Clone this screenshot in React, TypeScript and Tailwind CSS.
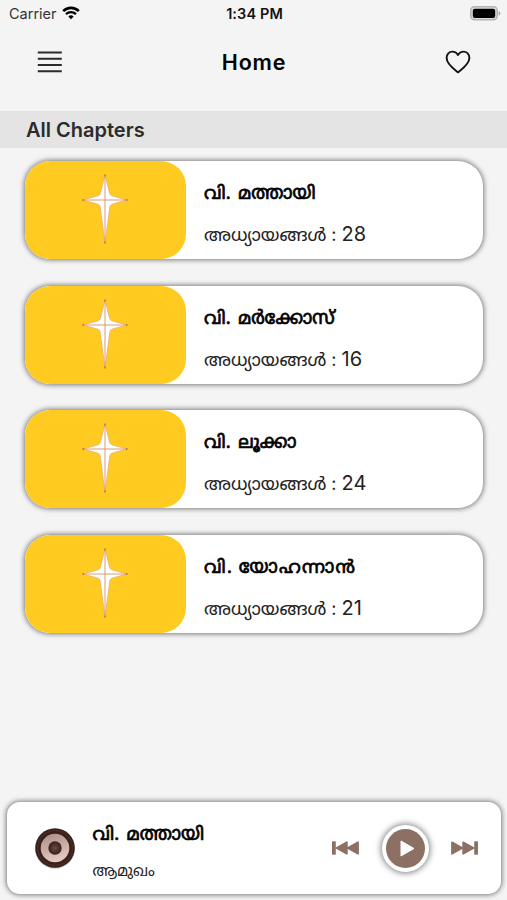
import { clsx } from "clsx";

const chapters = [
  { title: "വി. മത്തായി", count: 28 },
  { title: "വി. മർക്കോസ്", count: 16 },
  { title: "വി. ലൂക്കാ", count: 24 },
  { title: "വി. യോഹന്നാൻ", count: 21, titleClass: "tracking-[1.3px] [word-spacing:-1.5px]" },
];

function StatusBar() {
  return (
    <div className="flex h-7 items-center justify-between pl-[9px] pr-[7px] font-['Inter',sans-serif] text-[#111]">
      <div className="flex w-40 items-center gap-[5px]">
        <span className="text-[14.5px] leading-none text-[#333]">Carrier</span>
        <svg width="18" height="14" viewBox="0 0 18 14" fill="none" className="-mt-[2px]">
          <path d="M1.2 5.1a11.2 11.2 0 0 1 15.6 0" stroke="#000" strokeWidth="2.7" />
          <path d="M4 8.2a7.2 7.2 0 0 1 10 0" stroke="#000" strokeWidth="2.3" />
          <path d="M9 13.3l-2.7-2.8a3.8 3.8 0 0 1 5.4 0z" fill="#000" />
        </svg>
      </div>
      <span className="pt-[1px] text-[14.5px] font-semibold leading-none tracking-[0.1px]">1:34 PM</span>
      <div className="flex w-40 justify-end">
        <svg width="31" height="15" viewBox="0 0 31 15" className="-mr-[1px] -mt-[2px]">
          <rect x="0.8" y="0.8" width="26.4" height="13" rx="3.7" fill="#ddd" stroke="#b4b4b4" strokeWidth="1.6" />
          <rect x="2.8" y="2.7" width="22.4" height="9.2" rx="2" fill="#000" />
          <path d="M28.6 5v4.8c2.4-1 2.4-3.8 0-4.8z" fill="#aaa" />
        </svg>
      </div>
    </div>
  );
}

function Header() {
  return (
    <header className="flex h-[83px] items-start justify-between pl-[37px] pr-[36px] pt-[22px]">
      <svg width="26" height="24" viewBox="0 0 26 24" stroke="#2b2b2b" strokeWidth="1.9">
        <path d="M.8 2.5h24M.8 8.8h24M.8 15h24M.8 21.3h24" />
      </svg>
      <h1 className="font-['Inter',sans-serif] text-[21.5px] font-semibold leading-6 tracking-[0.8px] text-black">
        Home
      </h1>
      <svg width="26" height="24" viewBox="0 0 26 24" fill="none" stroke="#111" strokeWidth="1.9">
        <path d="M13 22.3C10.500 20.200 1.600 14.600 1.600 7.800c0-3.700 2.700-6.200 5.700-6.200 2.500 0 4.500 1.200 5.700 3.400 1.200-2.200 3.200-3.400 5.700-3.400 3 0 5.700 2.500 5.700 6.200 0 6.800-8.900 12.400-11.400 14.500z" strokeLinejoin="round" />
      </svg>
    </header>
  );
}

function Star() {
  return (
    <svg width="48" height="72" viewBox="0 0 48 72" className="-mt-[2px]">
      <path
        d="M24 2L28.500 20Q29 22.300 31.500 23L46 27L31.500 31Q29.300 31.500 28.800 34L24 70L19.200 34Q18.700 31.500 16.500 31L2 27L16.500 23Q19 22.300 19.500 20Z"
        fill="#fff"
        stroke="#e5a870"
        strokeWidth="0.7"
      />
      <path d="M24 2v68M2 27h44" stroke="#dc9a74" strokeWidth="1" />
      <path d="M23.200 2.500h1.600M23.200 69.500h1.600M1.500 27h1.500M45 27h1.500" stroke="#b57f4a" strokeWidth="1.800" />
    </svg>
  );
}

function Title({ children, className = "[word-spacing:1.7px]" }: { children: string; className?: string }) {
  return (
    <h2 className={clsx("whitespace-nowrap font-['Noto_Sans_Malayalam',sans-serif] text-[18.3px] font-normal leading-6 text-black [-webkit-text-stroke:0.7px_#000]", className)}>
      {children}
    </h2>
  );
}

function ChapterCard({ title, count, titleClass }: { title: string; count: number; titleClass?: string }) {
  return (
    <div className="flex h-[98px] overflow-hidden rounded-[25px] bg-white shadow-[0_0_5px_1px_rgba(0,0,0,0.5)]">
      <div className="flex w-[161px] shrink-0 items-center justify-center rounded-[25px] bg-[#ffcb21]">
        <Star />
      </div>
      <div className="pl-[18.500px] pt-[22px]">
        <Title className={titleClass}>{title}</Title>
        <p className="mt-[15px] whitespace-nowrap font-['Inter','Noto_Sans_Malayalam',sans-serif] text-[18px] leading-6 text-[#222]">
          അധ്യായങ്ങൾ : <span className="text-[20px]">{count}</span>
        </p>
      </div>
    </div>
  );
}

function Speaker() {
  return (
    <svg width="44" height="44" viewBox="0 0 44 44">
      <defs>
        <linearGradient id="cone" x1="0" y1="0" x2="0.3" y2="1">
          <stop offset="0" stopColor="#a98c84" />
          <stop offset="1" stopColor="#e3c8c0" />
        </linearGradient>
        <radialGradient id="cap">
          <stop offset="0" stopColor="#6b4a42" />
          <stop offset="1" stopColor="#37201b" />
        </radialGradient>
      </defs>
      <circle cx="22" cy="22.800" r="20" fill="#000" opacity="0.2" />
      <circle cx="22" cy="22" r="19.800" fill="#39211b" />
      <circle cx="22" cy="22" r="17.500" fill="none" stroke="#452b23" strokeWidth="1.500" />
      <circle cx="22" cy="22" r="14.300" fill="url(#cone)" />
      <circle cx="22" cy="22" r="6.700" fill="url(#cap)" />
    </svg>
  );
}

function SkipIcon({ className }: { className?: string }) {
  return (
    <svg width="27" height="14" viewBox="0 0 27 14" fill="#8d7064" className={className}>
      <rect x="0" y="0.300" width="3.800" height="13.400" rx="0.800" />
      <path d="M4.500 7L14.800 1.300v11.400zM15.700 7L26 1.300v11.400z" stroke="#8d7064" strokeWidth="1.800" strokeLinejoin="round" />
    </svg>
  );
}

function Player() {
  return (
    <div className="ml-[7px] mr-[6px] mb-[6px] flex h-[92px] items-center rounded-[13px] bg-white pl-[26px] pr-[23px] shadow-[0_0_5px_1px_rgba(0,0,0,0.5)]">
      <Speaker />
      <div className="ml-[15.500px] flex-1 self-stretch pt-[22px]">
        <Title>വി. മത്തായി</Title>
        <p className="mt-[13px] whitespace-nowrap font-['Noto_Sans_Malayalam',sans-serif] text-[15px] leading-6 text-[#222]">
          ആമുഖം
        </p>
      </div>
      <button>
        <SkipIcon />
      </button>
      <button className="ml-[23px] mr-[22px] flex size-[47px] items-center justify-center rounded-full bg-white shadow-[0_0_6px_1px_rgba(0,0,0,0.5)]">
        <span className="flex size-[39px] items-center justify-center rounded-full bg-[#8d7064]">
          <svg width="15" height="17" viewBox="0 0 15 17" className="ml-[3px]">
            <path d="M1 1l13 7.500-13 7.500z" fill="#fff" stroke="#fff" strokeLinejoin="round" />
          </svg>
        </span>
      </button>
      <button>
        <SkipIcon className="rotate-180" />
      </button>
    </div>
  );
}

export default function App() {
  return (
    <div className="flex h-[900px] w-[507px] flex-col overflow-hidden bg-[#f4f4f4]">
      <StatusBar />
      <Header />
      <div className="flex h-[37px] items-center bg-[#e4e4e4] pl-[26px] pt-[1px] font-['Inter',sans-serif] text-[20px] font-semibold text-[#2b2b2b]">
        All Chapters
      </div>
      <main className="flex flex-1 flex-col gap-[26.500px] px-[24.500px] pt-[13px]">
        {chapters.map((chapter) => (
          <ChapterCard key={chapter.title} {...chapter} />
        ))}
      </main>
      <Player />
    </div>
  );
}
